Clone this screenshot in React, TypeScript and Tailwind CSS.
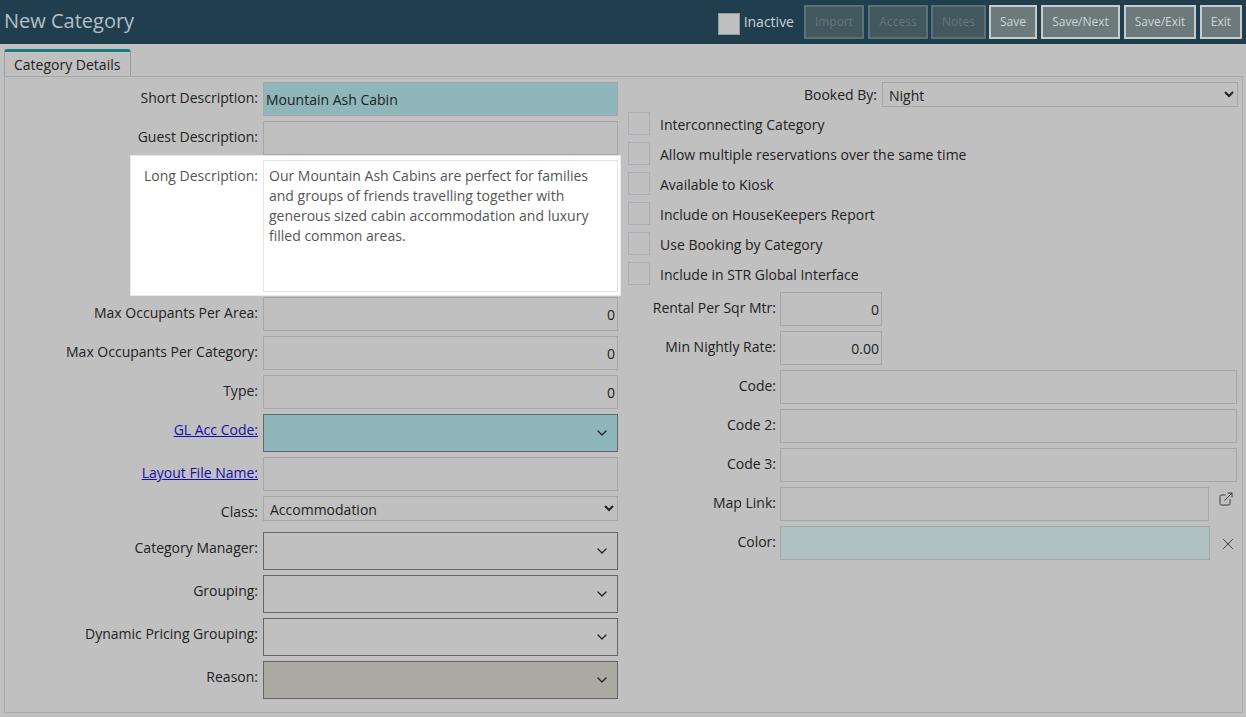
import { ChevronDown, ExternalLink, X } from "lucide-react";

const fieldBorder = "border border-[#a6a6a6]";
const labelCls = "shrink-0 pt-[6px] text-right leading-5 text-[#222]";

function HeaderButton({ label, cls, off }: { label: string; cls: string; off?: boolean }) {
  return (
    <button
      className={`h-[34px] border-[2px] text-[12px] leading-none ${cls} ${
        off
          ? "border-[#5a7078] bg-[#42585f] text-[#64777d]"
          : "border-[#c6cbcc] bg-[#6c7a7c] text-[#cfd4d5]"
      }`}
    >
      {label}
    </button>
  );
}

function TextRow({ label, value, right, cls = "bg-transparent", link }: { label: string; value?: string; right?: boolean; cls?: string; link?: boolean }) {
  return (
    <div className="flex gap-[5px]">
      <div className={`${labelCls} w-[253px]`}>
        {link ? <a className="text-[#1a0dab] underline" href="#">{label}</a> : label}
      </div>
      <input
        readOnly
        value={value ?? ""}
        className={`h-[34px] w-[355px] ${fieldBorder} pl-[2px] pr-[2px] pt-[1px] text-[#222] outline-none ${right ? "text-right" : ""} ${cls}`}
      />
    </div>
  );
}

function ComboRow({ label, cls = "", link }: { label: string; cls?: string; link?: boolean }) {
  return (
    <div className="flex gap-[5px]">
      <div className={`${labelCls} w-[253px]`}>
        {link ? <a className="text-[#1a0dab] underline" href="#">{label}</a> : label}
      </div>
      <div className={`flex h-[38px] w-[355px] items-center justify-end border border-[#666] pb-[1px] pr-[7px] ${cls}`}>
        <ChevronDown size={16} strokeWidth={1.9} className="text-[#222]" />
      </div>
    </div>
  );
}

function CheckRow({ label }: { label: string }) {
  return (
    <div className="flex h-[23px] items-center gap-[10px]">
      <div className="h-[23px] w-[22px] border border-[#adadb8]" />
      <span className="translate-y-[1px] leading-5 text-[#222]">{label}</span>
    </div>
  );
}

function RightField({ label, value, width, cls = "bg-transparent", children }: { label: string; value?: string; width: string; cls?: string; children?: React.ReactNode }) {
  return (
    <div className="flex gap-[4px]">
      <div className={`${labelCls} w-[148px]`}>{label}</div>
      <input
        readOnly
        value={value ?? ""}
        className={`h-[34px] ${width} ${fieldBorder} pl-[2px] pr-[2px] pt-[1px] text-right text-[#222] outline-none ${cls}`}
      />
      {children}
    </div>
  );
}

export default function App() {
  return (
    <div className="h-[717px] w-[1246px] overflow-hidden bg-[#c0c0c0] font-['Open_Sans',sans-serif] text-[14px]">
      {/* Top bar */}
      <div className="flex h-[44px] items-start justify-between bg-[#203e4e] pl-[4px] pr-[4px] pt-[5px]">
        <h1 className="text-[20px] leading-[32px] text-[#b4c0c5]">New Category</h1>
        <div className="flex items-start">
          <div className="mr-[10px] mt-[8px] flex items-start gap-[4px]">
            <div className="h-[22px] w-[22px] border border-[#8d9a9f] bg-[#c0c0c0]" />
            <span className="leading-[18px] text-[#ccd2d4]">Inactive</span>
          </div>
          <div className="flex">
            <HeaderButton label="Import" cls="w-[60px]" off />
            <HeaderButton label="Access" cls="ml-[4px] w-[60px]" off />
            <HeaderButton label="Notes" cls="ml-[3px] w-[55px]" off />
            <HeaderButton label="Save" cls="ml-[3px] w-[48px]" />
            <HeaderButton label="Save/Next" cls="ml-[4px] w-[79px]" />
            <HeaderButton label="Save/Exit" cls="ml-[4px] w-[72px]" />
            <HeaderButton label="Exit" cls="ml-[4px] w-[42px]" />
          </div>
        </div>
      </div>

      {/* Tab strip */}
      <div className="ml-[4px] mt-[5px] h-[27px] w-[127px] rounded-t-[3px] border-x border-t-[3px] border-x-[#9c9c9c] border-t-[#1b7c80] pl-[9px] leading-[26px] text-[#222]">
        Category Details
      </div>

      {/* Panel */}
      <div className="ml-[4px] flex h-[637px] w-[1239px] gap-[8px] border border-[#a8a8a8]">
        {/* Left column */}
        <div className="flex w-[615px] flex-col pt-[5px]">
          <TextRow label="Short Description:" value="Mountain Ash Cabin" cls="bg-[#8fb6ba]" />
          <div className="mt-[5px]">
            <TextRow label="Guest Description:" />
          </div>
          <div className="ml-[125px] flex h-[141px] w-[491px] gap-[5px] border border-[#e8e8e8] bg-white pt-[4px]">
            <div className={`${labelCls} w-[127px] pt-[5px] text-[#555]`}>Long Description:</div>
            <textarea
              readOnly
              value="Our Mountain Ash Cabins are perfect for families and groups of friends travelling together with generous sized cabin accommodation and luxury filled common areas."
              className="h-[132px] w-[355px] resize-none border border-[#e4e4e4] px-[5px] py-[5px] leading-5 text-[#555] outline-none"
            />
          </div>
          <div className="mt-[1px] flex flex-col gap-[5px]">
            <TextRow label="Max Occupants Per Area:" value="0" right />
            <TextRow label="Max Occupants Per Category:" value="0" right />
            <TextRow label="Type:" value="0" right />
            <ComboRow label="GL Acc Code:" cls="bg-[#8fb6ba]" link />
            <TextRow label="Layout File Name:" link />
            <div className="flex gap-[5px]">
              <div className={`${labelCls} w-[253px] pt-[5px]`}>Class:</div>
              <select className={`h-[25px] w-[355px] ${fieldBorder} bg-transparent pl-[2px] pt-[1px] leading-none text-[#222] outline-none`} defaultValue="Accommodation">
                <option>Accommodation</option>
              </select>
            </div>
          </div>
          <div className="mt-[10px] flex flex-col gap-[5px]">
            <ComboRow label="Category Manager:" />
            <ComboRow label="Grouping:" />
            <ComboRow label="Dynamic Pricing Grouping:" />
            <ComboRow label="Reason:" cls="bg-[#aaaaa2]" />
          </div>
        </div>

        {/* Right column */}
        <div className="flex flex-1 flex-col pt-[5px]">
          <div className="flex gap-[5px]">
            <div className="w-[249px] pt-[3px] text-right leading-5 text-[#222]">Booked By:</div>
            <select className={`h-[25px] w-[356px] ${fieldBorder} bg-transparent pl-[2px] pt-[1px] text-[#222] outline-none`} defaultValue="Night">
              <option>Night</option>
            </select>
          </div>
          <div className="mt-[5px] flex flex-col gap-[7px]">
            <CheckRow label="Interconnecting Category" />
            <CheckRow label="Allow multiple reservations over the same time" />
            <CheckRow label="Available to Kiosk" />
            <CheckRow label="Include on HouseKeepers Report" />
            <CheckRow label="Use Booking by Category" />
            <CheckRow label="Include in STR Global Interface" />
          </div>
          <div className="mt-[7px] flex flex-col gap-[5px]">
            <RightField label="Rental Per Sqr Mtr:" value="0" width="w-[102px]" />
            <RightField label="Min Nightly Rate:" value="0.00" width="w-[102px]" />
            <RightField label="Code:" width="w-[457px]" />
            <RightField label="Code 2:" width="w-[457px]" />
            <RightField label="Code 3:" width="w-[457px]" />
            <RightField label="Map Link:" width="w-[429px]">
              <ExternalLink size={16} strokeWidth={1.4} className="ml-[5px] mt-[4px] text-[#333]" />
            </RightField>
            <RightField label="Color:" width="w-[430px]" cls="bg-[#b0c1c1]">
              <X size={18} strokeWidth={1.2} className="ml-[5px] mt-[9px] text-[#333]" />
            </RightField>
          </div>
        </div>
      </div>
    </div>
  );
}
